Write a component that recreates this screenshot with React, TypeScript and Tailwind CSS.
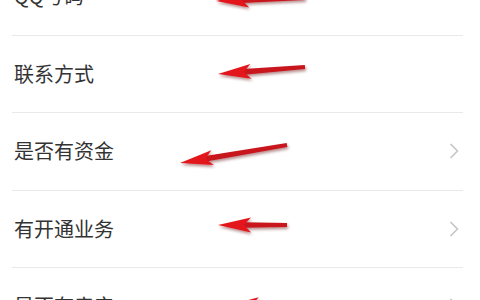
import React from 'react';

type Row = { label: string; chevron: boolean };

const rows: Row[] = [
  { label: 'QQ号码', chevron: false },
  { label: '联系方式', chevron: false },
  { label: '是否有资金', chevron: true },
  { label: '有开通业务', chevron: true },
  { label: '是否有房产', chevron: true },
];

// annotation arrows: tip -> tail
const arrows = [
  { tip: [216, 1], tail: [305, -2] },
  { tip: [218, 74], tail: [305, 67] },
  { tip: [180, 163], tail: [287, 145] },
  { tip: [218, 225], tail: [287, 225] },
  { tip: [226, 306], tail: [305, 303] },
];

const Chevron = () => (
  <svg width="10" height="16" viewBox="0 0 10 16" fill="none">
    <path d="M2 1.5 L8.5 8 L2 14.5" stroke="#c6c6c6" strokeWidth="1.7" strokeLinejoin="round" strokeLinecap="round" />
  </svg>
);

function arrowShape(tip: number[], tail: number[]) {
  const dx = tail[0] - tip[0];
  const dy = tail[1] - tip[1];
  const len = Math.hypot(dx, dy);
  const ux = dx / len;
  const uy = dy / len;
  const px = -uy;
  const py = ux;
  const head = 33;
  const hw = 7.5;
  const bx = tip[0] + ux * head;
  const by = tip[1] + uy * head;
  const nx = tip[0] + ux * (head - 7);
  const ny = tip[1] + uy * (head - 7);
  const headPts = [
    [tip[0], tip[1]],
    [bx + px * hw, by + py * hw],
    [nx, ny],
    [bx - px * hw, by - py * hw],
  ];
  const sw1 = 2.8;
  const sw2 = 2;
  const shaftPts = [
    [nx + px * sw1, ny + py * sw1],
    [tail[0] + px * sw2, tail[1] + py * sw2],
    [tail[0] - px * sw2, tail[1] - py * sw2],
    [nx - px * sw1, ny - py * sw1],
  ];
  const s = (p: number[][]) => p.map((q) => q.join(',')).join(' ');
  return { head: s(headPts), shaft: s(shaftPts) };
}

export default function App() {
  return (
    <div className="relative w-[480px] h-[300px] overflow-hidden bg-white" style={{ fontFamily: '"Noto Sans CJK SC", "Noto Sans", sans-serif' }}>
      <div className="-mt-[42px] ml-3 mr-[17px]">
        {rows.map((r) => (
          <div key={r.label} className="flex h-[77.5px] items-center justify-between border-b border-[#e9e9e9] pl-[2px] pr-[4px]">
            <span className="text-[20px] leading-none text-[#333333]">{r.label}</span>
            {r.chevron && <Chevron />}
          </div>
        ))}
      </div>
      <svg className="absolute inset-0" width="480" height="300" viewBox="0 0 480 300">
        <defs>
          <filter id="sh" x="-20%" y="-60%" width="140%" height="220%">
            <feGaussianBlur in="SourceGraphic" stdDeviation="0.5" result="b" />
            <feDropShadow in="b" dx="1" dy="2" stdDeviation="1.8" floodColor="#5a1010" floodOpacity="0.45" />
          </filter>
        </defs>
        {arrows.map((a, i) => {
          const sh = arrowShape(a.tip, a.tail);
          return (
            <g key={i} filter="url(#sh)">
              <polygon points={sh.shaft} fill="#c8171d" />
              <polygon points={sh.head} fill="#e3171c" />
            </g>
          );
        })}
      </svg>
    </div>
  );
}
